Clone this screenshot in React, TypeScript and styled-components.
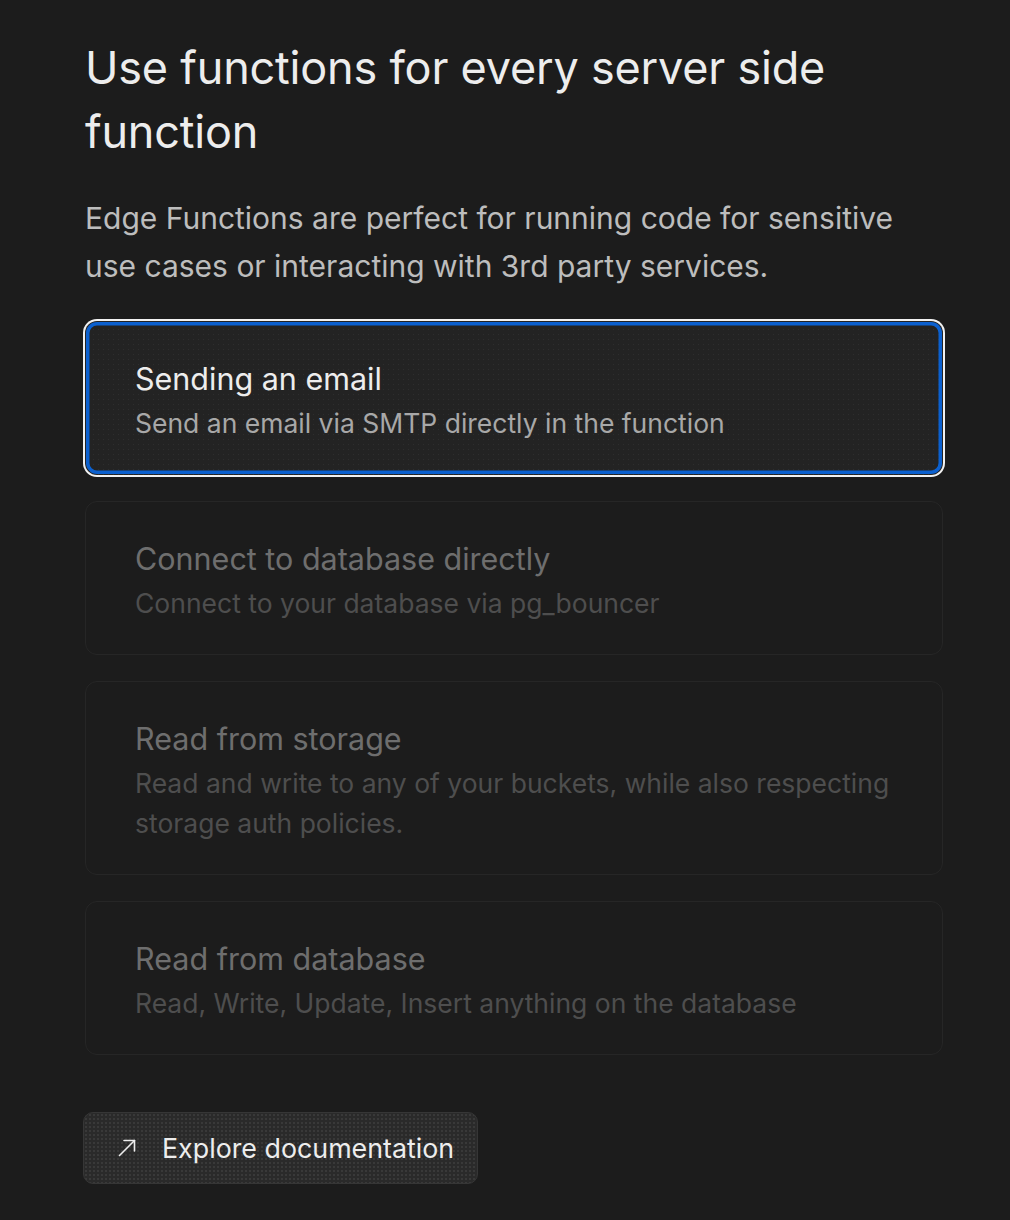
import React from "react";
import styled, { createGlobalStyle } from "styled-components";

const Global = createGlobalStyle`
  html, body { margin: 0; padding: 0; background: #1c1c1c; }
  body { font-family: Inter, "Noto Sans", sans-serif; -webkit-font-smoothing: antialiased; }
`;

const Page = styled.div`
  width: 1010px;
  min-height: 1220px;
  box-sizing: border-box;
  padding: 36px 67px 0 85px;
  background: #1c1c1c;
  display: flex;
  flex-direction: column;
`;

const Title = styled.h1`
  margin: 0;
  font-size: 45px;
  line-height: 64px;
  font-weight: 400;
  color: #ededed;
  letter-spacing: -0.2px;
  max-width: 780px;
`;

const Lead = styled.p`
  margin: 30px 0 0;
  font-size: 30px;
  line-height: 48px;
  color: #bdbdbd;
  font-weight: 400;
  max-width: 840px;
`;

const List = styled.div`
  margin-top: 31px;
  display: flex;
  flex-direction: column;
  gap: 26px;
`;

const Card = styled.div<{ $active?: boolean }>`
  width: 858px;
  box-sizing: border-box;
  padding: 33px 40px 31px 49px;
  border-radius: 12px;
  border: 1px solid ${(p) => (p.$active ? "transparent" : "#262626")};
  background: ${(p) =>
    p.$active
      ? "radial-gradient(rgba(255,255,255,0.05) 0.8px, transparent 1px) 0 0 / 5px 5px, #232323"
      : "#1c1c1c"};
  box-shadow: ${(p) =>
    p.$active ? "inset 0 0 0 3.5px #0b60cf, 0 0 0 2px #f2f2f2" : "none"};
  display: flex;
  flex-direction: column;
`;

const CardTitle = styled.div<{ $active?: boolean }>`
  font-size: 30.5px;
  line-height: 48px;
  color: ${(p) => (p.$active ? "#ededed" : "#6e6e6e")};
`;

const CardDesc = styled.div<{ $active?: boolean }>`
  font-size: 26.5px;
  line-height: 40px;
  color: ${(p) => (p.$active ? "#a8a8a8" : "#4e4e4e")};
`;

const Button = styled.button`
  margin: 57px 0 0 -2px;
  align-self: flex-start;
  height: 72px;
  width: 395px;
  box-sizing: border-box;
  padding: 0 20px 0 34px;
  display: flex;
  align-items: center;
  gap: 26px;
  border-radius: 10px;
  border: 1px solid #363636;
  background: radial-gradient(rgba(255,255,255,0.07) 0.8px, transparent 1px) 0 0 / 4px 4px, #2a2a2a;
  color: #ededed;
  font-family: inherit;
  font-size: 26.8px;
  white-space: nowrap;
  cursor: pointer;

  svg { flex-shrink: 0; }
`;

const Arrow = () => (
  <svg width="18" height="18" viewBox="0 0 18 18" fill="none" stroke="#ededed" strokeWidth="1.6" strokeLinecap="round" strokeLinejoin="round">
    <path d="M1.5 16.5 L16.5 1.5" />
    <path d="M6 1.5 H16.5 V12" />
  </svg>
);

const items = [
  { t: "Sending an email", d: "Send an email via SMTP directly in the function", active: true },
  { t: "Connect to database directly", d: "Connect to your database via pg_bouncer" },
  { t: "Read from storage", d: "Read and write to any of your buckets, while also respecting storage auth policies." },
  { t: "Read from database", d: "Read, Write, Update, Insert anything on the database" },
];

export default function App() {
  return (
    <>
      <Global />
      <Page>
        <Title>Use functions for every server side function</Title>
        <Lead>
          Edge Functions are perfect for running code for sensitive use cases or interacting with 3rd party services.
        </Lead>
        <List>
          {items.map((it) => (
            <Card key={it.t} $active={it.active}>
              <CardTitle $active={it.active}>{it.t}</CardTitle>
              <CardDesc $active={it.active}>{it.d}</CardDesc>
            </Card>
          ))}
        </List>
        <Button>
          <Arrow />
          Explore documentation
        </Button>
      </Page>
    </>
  );
}
